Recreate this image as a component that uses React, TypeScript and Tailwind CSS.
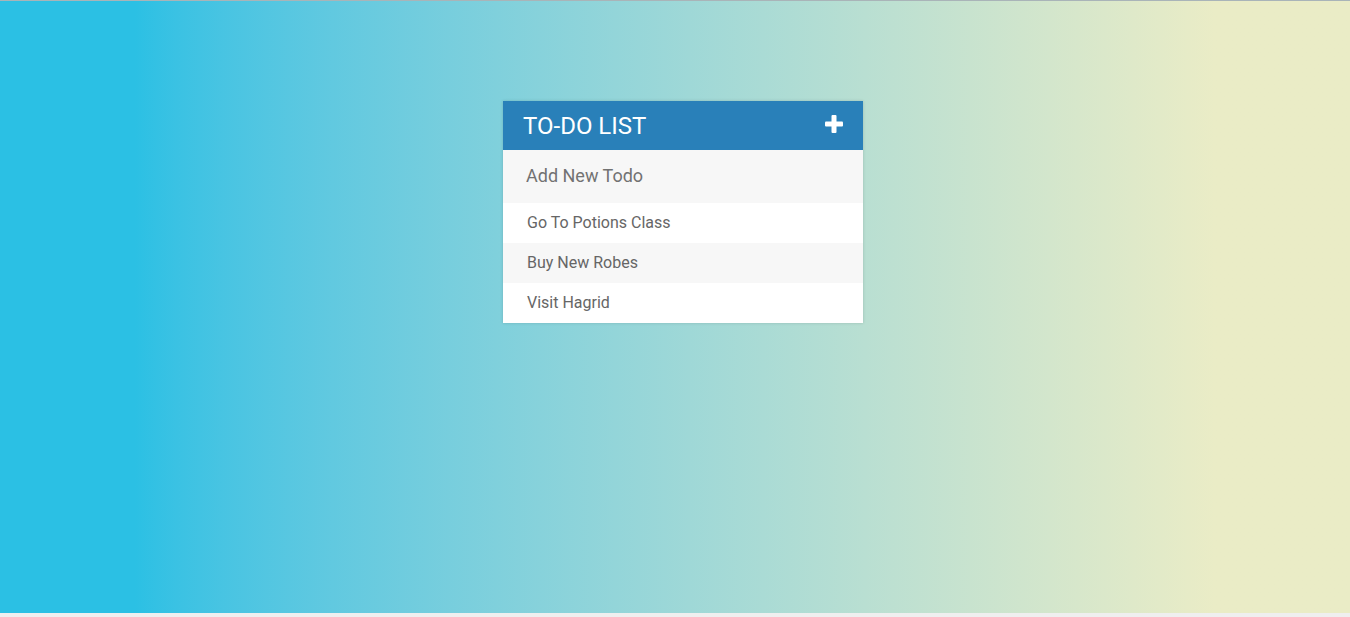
const todos = ['Go To Potions Class', 'Buy New Robes', 'Visit Hagrid'];

function PlusIcon() {
  return (
    <svg width="18" height="18" viewBox="0 0 18 18" className="fill-white">
      <rect x="6.5" y="0" width="5" height="18" rx="1" />
      <rect x="0" y="6.5" width="18" height="5" rx="1" />
    </svg>
  );
}

export default function App() {
  return (
    <div className="h-screen bg-[#efefef] font-['Roboto',sans-serif]">
      <div className="h-[613px] border-t border-[#a9b4b8] bg-linear-to-r from-[#2bc0e4] from-10% to-[#eaecc6] to-90%">
        <div className="flex justify-center pl-4 pt-[100px]">
          <div className="w-[360px] bg-white shadow-[0_0_3px_rgba(0,0,0,0.15)]">
            <div className="flex h-[49px] items-center justify-between bg-[#2980b9] pl-5 pr-5">
              <h1 className="text-[24px] leading-none text-white uppercase">To-Do List</h1>
              <button className="-mt-[4px]">
                <PlusIcon />
              </button>
            </div>
            <input
              type="text"
              placeholder="Add New Todo"
              className="block h-[53px] w-full bg-[#f7f7f7] pb-[2px] pl-[23px] text-[18px] text-[#666] outline-none placeholder:text-[#727272]"
            />
            <ul>
              {todos.map((t, i) => (
                <li
                  key={t}
                  className={
                    'h-10 pl-6 text-[16px] leading-10 text-[#666] ' +
                    (i % 2 === 1 ? 'bg-[#f7f7f7]' : 'bg-white')
                  }
                >
                  {t}
                </li>
              ))}
            </ul>
          </div>
        </div>
      </div>
    </div>
  );
}
